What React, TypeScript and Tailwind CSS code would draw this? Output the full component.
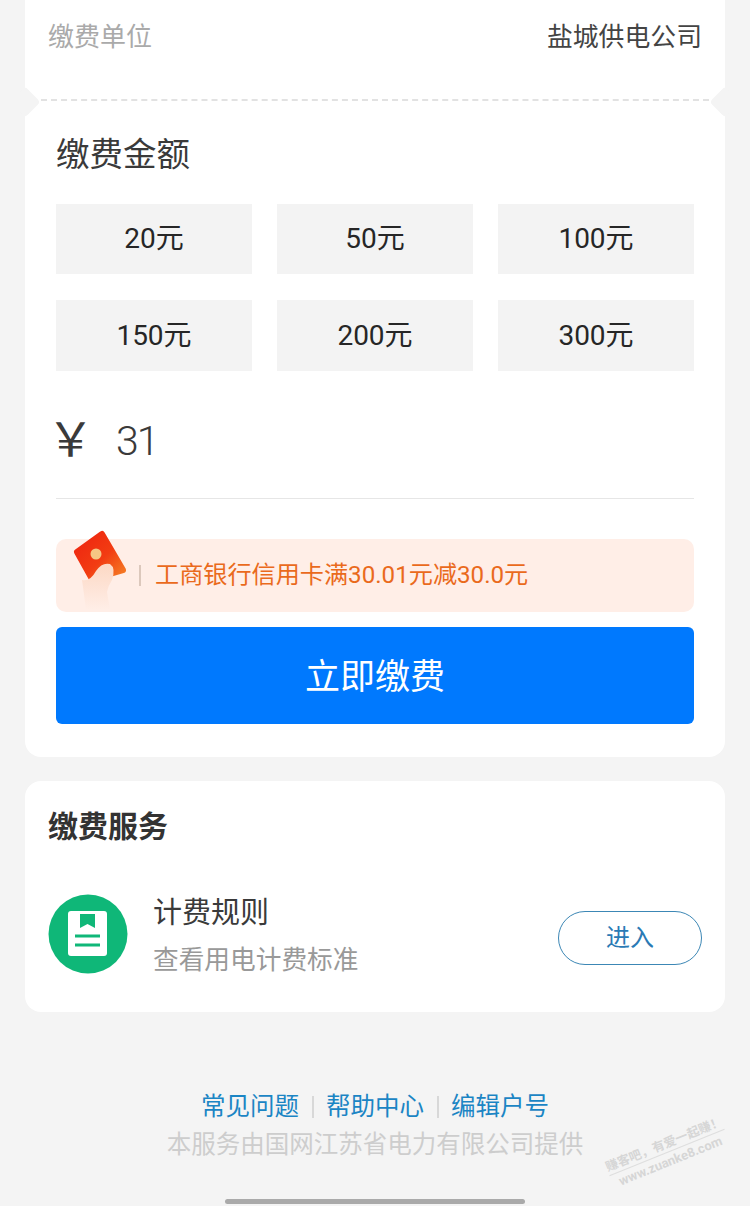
export default function App() {
  const amounts = ["20元", "50元", "100元", "150元", "200元", "300元"];
  return (
    <div className="relative w-[750px] h-[1206px] overflow-hidden bg-[#f4f4f4] font-['Roboto','Noto_Sans_CJK_SC',sans-serif] antialiased">
      <div className="mx-[25px] w-[700px] h-[99px] bg-white flex justify-between pl-[23px] pr-[23px] pt-[18px]">
        <span className="text-[26px] leading-[38px] text-[#aaaaaa]">缴费单位</span>
        <span className="text-[25.85px] leading-[38px] text-[#444444]">盐城供电公司</span>
      </div>
      <div className="relative mx-[25px] w-[700px] h-[658px] bg-white rounded-b-[16px] px-[31px]">
        <div className="absolute left-[16px] right-[16px] top-0 border-t-2 border-dashed border-[#e2e2e2]"></div>
        <div className="absolute -left-[11px] -top-[8px] w-[22px] h-[22px] rotate-45 rounded-[4px] bg-[#f4f4f4]"></div>
        <div className="absolute -right-[11px] -top-[8px] w-[22px] h-[22px] rotate-45 rounded-[4px] bg-[#f4f4f4]"></div>
        <div className="pt-[34px] text-[33.5px] leading-[44px] text-[#3a3a3a]">缴费金额</div>
        <div className="mt-[27px] grid grid-cols-3 grid-rows-[70px_71px] gap-x-[25px] gap-y-[26px]">
          {amounts.map((a) => (
            <div key={a} className="bg-[#f3f3f3] flex items-center justify-center text-[28px] text-[#262626]">{a}</div>
          ))}
        </div>
        <div className="mt-[38px] flex items-center h-[64px] text-[#3a3a3a]">
          <span className="-ml-[9px] mr-[22px] mb-[12px] text-[47px] leading-none font-['Noto_Sans_CJK_SC',sans-serif]">￥</span>
          <span className="text-[41px] leading-none font-light tracking-[-2px]">31</span>
        </div>
        <div className="mt-[25px] h-px bg-[#e6e6e6]"></div>
        <div className="relative mt-[40px] h-[73px] rounded-[10px] bg-[#ffeee7] flex items-center pl-[83px]">
          <svg className="absolute left-[4px] -top-[19px]" width="90" height="110" viewBox="0 0 90 110">
            <defs>
              <linearGradient id="card" x1="0" y1="0" x2="1" y2="1">
                <stop offset="0" stopColor="#ee2410" />
                <stop offset="0.55" stopColor="#f23c12" />
                <stop offset="1" stopColor="#f58025" />
              </linearGradient>
              <linearGradient id="hand" x1="0" y1="0" x2="0" y2="1">
                <stop offset="0" stopColor="#fcd8c4" />
                <stop offset="1" stopColor="#ffeee7" />
              </linearGradient>
            </defs>
            <path d="M42 14 L17 32 L32 59 L63 50Z" fill="url(#card)" stroke="url(#card)" strokeWidth="6" strokeLinejoin="round" />
            <circle cx="36" cy="34" r="5.5" fill="#f6c684" />
            <path d="M22 60 Q30 62 36 51 Q42 42 50 44 Q56 48 52 60 Q48 66 47 72 L50 90 L26 90 Q24 74 22 60Z" fill="url(#hand)" />
          </svg>
          <span className="w-[2px] h-[21px] bg-[#dcc8bc]"></span>
          <span className="ml-[14px] text-[24.15px] text-[#ea6a1c] whitespace-nowrap">工商银行信用卡满30.01元减30.0元</span>
        </div>
        <div className="mt-[15px] h-[97px] pt-[6px] rounded-[6px] bg-[#0079fe] flex items-center justify-center text-[35px] text-white">立即缴费</div>
      </div>
      <div className="mx-[25px] mt-[24px] w-[700px] h-[231px] bg-white rounded-[16px] pl-[23px] pr-[23px] pt-[26px]">
        <div className="text-[30px] leading-[40px] font-bold text-[#333333]">缴费服务</div>
        <div className="mt-[43px] flex items-center">
          <svg width="80" height="80" viewBox="0 0 80 80">
            <circle cx="40" cy="40" r="39.5" fill="#0fb778" />
            <rect x="20" y="17" width="39" height="45" rx="3" fill="#fff" />
            <path d="M32 20 H47 V34 L39.5 30 L32 34Z" fill="#0fb778" />
            <path d="M27 42 H52 M27 51 H52" stroke="#0fb778" strokeWidth="3" />
          </svg>
          <div className="ml-[25px] mt-[5px] flex-1">
            <div className="text-[29px] leading-[36px] text-[#3a3a3a]">计费规则</div>
            <div className="mt-[12px] text-[25.7px] leading-[34px] text-[#999999]">查看用电计费标准</div>
          </div>
          <div className="w-[144px] h-[54px] mt-[9px] rounded-full border border-[#3c87b5] flex items-center justify-center text-[24px] text-[#2a7ab5]">进入</div>
        </div>
      </div>
      <div className="mt-[77px] flex justify-center items-center text-[24.5px] leading-[36px] text-[#1b85c4]">
        <span>常见问题</span><span className="mx-[12.5px] w-[2px] h-[22px] bg-[#d8d8d8]"></span>
        <span>帮助中心</span><span className="mx-[12.5px] w-[2px] h-[22px] bg-[#d8d8d8]"></span>
        <span>编辑户号</span>
      </div>
      <div className="mt-[2px] text-center text-[24.5px] leading-[36px] text-[#cdcdcd] whitespace-nowrap">本服务由国网江苏省电力有限公司提供</div>
      <div className="absolute left-[605px] top-[1136px] w-[124px] -rotate-[22deg] text-center text-[#d6d6d6] font-bold whitespace-nowrap">
        <div className="text-[12.5px] leading-[15px] pb-[1px] border-b border-[#dedede]">赚客吧，有爱一起赚！</div>
        <div className="text-[13px] leading-[15px] pt-[1px]">www.zuanke8.com</div>
      </div>
      <div className="absolute left-[225px] bottom-[2px] w-[300px] h-[5px] rounded-full bg-[#aaaaaa]"></div>
    </div>
  );
}
